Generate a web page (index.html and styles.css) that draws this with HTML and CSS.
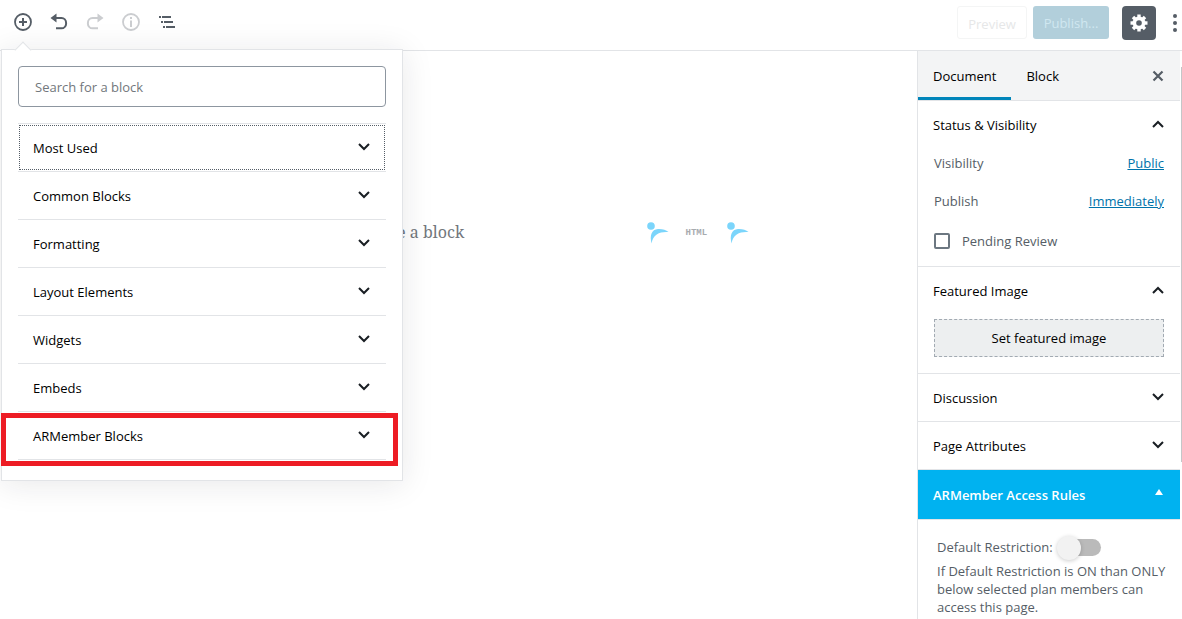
FILE: index.html
```html
<!DOCTYPE html>
<html lang="en">
<head>
    <meta charset="UTF-8">
    <meta name="viewport" content="width=device-width, initial-scale=1.0">
    <title>Edit Page</title>
    <link rel="stylesheet" href="styles.css">
</head>
<body>
    <!-- Chevrons shared by the panels -->
    <svg class="sprite" aria-hidden="true">
        <symbol id="chevron-down" viewBox="0 0 12 8"><path d="M1 1l5 5 5-5" fill="none" stroke="currentColor" stroke-width="2"/></symbol>
        <symbol id="chevron-up" viewBox="0 0 12 8"><path d="M1 7l5-5 5 5" fill="none" stroke="currentColor" stroke-width="2"/></symbol>
        <symbol id="armember" viewBox="0 0 22 22">
            <circle cx="4" cy="4" r="3.8" fill="currentColor"/>
            <path d="M4.600 21.500C2.500 13.500 4.500 7.500 11 7c4.500-.2 8 1 10.500 3C14 9.300 6 11.500 4.600 21.500z" fill="currentColor"/>
        </symbol>
    </svg>

    <header class="toolbar">
        <div class="toolbar-left">
            <div class="inserter">
                <button class="icon-button" type="button" aria-label="Add block" aria-expanded="true">
                    <svg width="20" height="20" viewBox="0 0 20 20" fill="none" stroke="currentColor"><circle cx="10" cy="10" r="8" stroke-width="1.800"/><path d="M10 6v8M6 10h8" stroke-width="2"/></svg>
                </button>

                <!-- Block inserter menu -->
                <div class="inserter-menu">
                    <input class="search" type="search" placeholder="Search for a block" aria-label="Search for a block">
                    <ul class="categories">
                        <li><button class="category focused" type="button">Most Used <svg class="chevron"><use href="#chevron-down"/></svg></button></li>
                        <li><button class="category" type="button">Common Blocks <svg class="chevron"><use href="#chevron-down"/></svg></button></li>
                        <li><button class="category" type="button">Formatting <svg class="chevron"><use href="#chevron-down"/></svg></button></li>
                        <li><button class="category" type="button">Layout Elements <svg class="chevron"><use href="#chevron-down"/></svg></button></li>
                        <li><button class="category" type="button">Widgets <svg class="chevron"><use href="#chevron-down"/></svg></button></li>
                        <li><button class="category" type="button">Embeds <svg class="chevron"><use href="#chevron-down"/></svg></button></li>
                        <li class="marked"><button class="category" type="button">ARMember Blocks <svg class="chevron"><use href="#chevron-down"/></svg></button></li>
                    </ul>
                </div>
            </div>
            <button class="icon-button" type="button" aria-label="Undo">
                <svg width="20" height="20" viewBox="0 0 20 20"><path d="M1.500 6l6-4.500v9z" fill="currentColor"/><path d="M6 6h6.500a4.500 5 0 0 1 0 10.300H7" fill="none" stroke="currentColor" stroke-width="2"/></svg>
            </button>
            <button class="icon-button" type="button" aria-label="Redo" disabled>
                <svg width="20" height="20" viewBox="0 0 20 20"><path d="M18.500 6l-6-4.500v9z" fill="currentColor"/><path d="M14 6H7.500a4.500 5 0 0 0 0 10.300H13" fill="none" stroke="currentColor" stroke-width="2"/></svg>
            </button>
            <button class="icon-button" type="button" aria-label="Content structure" disabled>
                <svg width="20" height="20" viewBox="0 0 20 20"><circle cx="10" cy="10" r="8" fill="none" stroke="currentColor" stroke-width="1.800"/><path d="M9 5h2v2H9zM9 8.500h2V15H9z" fill="currentColor"/></svg>
            </button>
            <button class="icon-button" type="button" aria-label="Block navigation">
                <svg width="20" height="20" viewBox="0 0 20 20" fill="currentColor"><path d="M2 4h2v2H2zM5 4h9v2H5zM4 9h2v2H4zM7 9h9v2H7zM6 14h2v2H6zM9 14h9v2H9z"/></svg>
            </button>
        </div>
        <div class="toolbar-right">
            <button class="preview" type="button" disabled>Preview</button>
            <button class="publish" type="button" disabled>Publish...</button>
            <button class="settings" type="button" aria-label="Settings">
                <svg width="20" height="20" viewBox="0 0 20 20"><g fill="currentColor"><circle cx="10" cy="10" r="6.500"/><path id="tooth" d="M8.300 1.500h3.400v17H8.300z"/><use href="#tooth" transform="rotate(45 10 10)"/><use href="#tooth" transform="rotate(90 10 10)"/><use href="#tooth" transform="rotate(135 10 10)"/></g><circle cx="10" cy="10" r="2.800" fill="#555d66"/></svg>
            </button>
            <button class="more" type="button" aria-label="More options">
                <svg width="6" height="20" viewBox="0 0 6 20" fill="currentColor"><circle cx="3" cy="3" r="2"/><circle cx="3" cy="10" r="2"/><circle cx="3" cy="17" r="2"/></svg>
            </button>
        </div>
    </header>

    <div class="layout">
        <main class="editor">
            <div class="appender">
                <p class="prompt">Start writing or type / to choose a block</p>
                <div class="shortcuts">
                    <button type="button" aria-label="ARMember form"><svg width="22" height="22"><use href="#armember"/></svg></button>
                    <button class="html" type="button">HTML</button>
                    <button type="button" aria-label="ARMember shortcode"><svg width="22" height="22"><use href="#armember"/></svg></button>
                </div>
            </div>
        </main>

        <aside class="sidebar">
            <div class="tabs">
                <button class="tab active" type="button">Document</button>
                <button class="tab" type="button">Block</button>
                <button class="close" type="button" aria-label="Close settings">
                    <svg width="12" height="12" viewBox="0 0 12 12"><path d="M1.500 1.500l9 9M10.500 1.500l-9 9" stroke="currentColor" stroke-width="2.200"/></svg>
                </button>
            </div>

            <section class="panel">
                <h2><button class="panel-title" type="button">Status &amp; Visibility <svg class="chevron"><use href="#chevron-up"/></svg></button></h2>
                <div class="panel-body status">
                    <div class="row"><span>Visibility</span><a href="#visibility">Public</a></div>
                    <div class="row"><span>Publish</span><a href="#publish">Immediately</a></div>
                    <div class="check"><input type="checkbox" id="pending"><label for="pending">Pending Review</label></div>
                </div>
            </section>

            <section class="panel">
                <h2><button class="panel-title" type="button">Featured Image <svg class="chevron"><use href="#chevron-up"/></svg></button></h2>
                <div class="panel-body featured">
                    <button class="set-image" type="button">Set featured image</button>
                </div>
            </section>

            <section class="panel">
                <h2><button class="panel-title" type="button">Discussion <svg class="chevron"><use href="#chevron-down"/></svg></button></h2>
            </section>

            <section class="panel">
                <h2><button class="panel-title" type="button">Page Attributes <svg class="chevron"><use href="#chevron-down"/></svg></button></h2>
            </section>

            <section class="rules">
                <h2><button class="panel-title" type="button">ARMember Access Rules <span class="triangle"></span></button></h2>
                <div class="rules-body">
                    <div class="restriction">
                        <label for="restriction">Default Restriction:</label>
                        <input class="switch" type="checkbox" id="restriction">
                    </div>
                    <p>If Default Restriction is ON than ONLY below selected plan members can access this page.</p>
                </div>
            </section>
        </aside>
    </div>
</body>
</html>
```
FILE: styles.css
```css
/* Basic Reset */
* {
    margin: 0;
    padding: 0;
    box-sizing: border-box;
}

body {
    display: flex;
    flex-direction: column;
    height: 100vh;
    overflow: hidden;
    background: #fff;
    color: #555d66;
    font-family: "Open Sans", "Noto Sans", sans-serif;
    font-size: 13px;
    line-height: 18px;
}

button, input {
    font: inherit;
    color: inherit;
}

button {
    display: flex;
    align-items: center;
    justify-content: center;
    background: none;
    border: 0;
}

svg {
    display: block;
}

.sprite {
    position: absolute;
    width: 0;
    height: 0;
}

.chevron {
    width: 12px;
    height: 8px;
}

/* Top toolbar */
.toolbar {
    position: relative;
    z-index: 2;
    display: flex;
    flex: none;
    justify-content: space-between;
    height: 51px;
    padding: 0 4px;
    border-bottom: 1px solid #e2e4e7;
}

.toolbar-left {
    display: flex;
    align-items: center;
    height: 44px;
}

.icon-button {
    width: 36px;
    height: 36px;
    padding-left: 2px;
}

.icon-button:disabled {
    color: #cbcdd0;
}

.toolbar-right {
    display: flex;
    align-items: center;
    height: 45px;
}

.preview {
    width: 70px;
    height: 33px;
    padding-top: 2px;
    border: 1px solid #f4f5f5;
    border-radius: 3px;
    color: #e6e7e8;
}

.publish {
    width: 76px;
    height: 33px;
    margin-left: 6px;
    border-radius: 3px;
    background: #b2cfdb;
    color: #d0e7f0;
}

.settings {
    width: 34px;
    height: 34px;
    margin-left: 13px;
    border-radius: 4px;
    background: #555d66;
    color: #fff;
}

.more {
    margin-left: 16px;
}

/* Inserter menu hangs below the add button */
.inserter-menu {
    position: absolute;
    top: 49px;
    left: 1px;
    width: 402px;
    padding: 16px 16px 20px;
    background: #fff;
    border: 1px solid #e2e4e7;
    box-shadow: 0 3px 30px rgba(25, 30, 35, 0.1);
}

.inserter-menu::before {
    content: "";
    position: absolute;
    top: -6px;
    left: 15px;
    width: 11px;
    height: 11px;
    background: #fff;
    border: solid #e2e4e7;
    border-width: 1px 0 0 1px;
    transform: rotate(45deg);
}

.search {
    display: block;
    position: relative;
    width: 100%;
    height: 41px;
    margin-bottom: 16px;
    padding: 0 16px;
    border: 1px solid #8d96a0;
    border-radius: 4px;
    background: #fff;
    appearance: none;
}

.search::placeholder {
    color: #72777c;
    opacity: 1;
}

.categories {
    list-style: none;
    border-bottom: 1px solid #e2e4e7;
}

.categories li {
    position: relative;
    border-top: 1px solid #e2e4e7;
}

.category {
    justify-content: space-between;
    width: 100%;
    height: 47px;
    padding: 0 16px 0 15px;
    color: #000;
    font-weight: 500;
}

.category .chevron {
    margin-bottom: 1px;
    color: #191e23;
}

.focused {
    outline: 1px dotted #555d66;
    outline-offset: -2px;
}

.marked::after {
    content: "";
    position: absolute;
    top: 1px;
    right: -12px;
    bottom: -7px;
    left: -17px;
    border: 5px solid #ed1c24;
    pointer-events: none;
}

/* Editor */
.layout {
    display: flex;
    flex: 1;
    min-height: 0;
}

.editor {
    flex: 1;
    padding-top: 160px;
}

.appender {
    display: flex;
    align-items: center;
    justify-content: space-between;
    max-width: 610px;
    height: 42px;
    margin: 0 auto;
    padding: 0 15px 0 13px;
}

.prompt {
    color: #72777c;
    font-family: "Noto Serif", "DejaVu Serif Condensed", "DejaVu Serif", serif;
    font-size: 16px;
    line-height: 28px;
}

.shortcuts {
    display: flex;
    gap: 17px;
    padding-top: 2px;
    color: #7bd5fb;
}

.shortcuts .html {
    justify-content: flex-start;
    width: 24px;
    color: #a7abaf;
    font-family: "Liberation Mono", monospace;
    font-size: 9px;
    font-weight: 700;
}

/* Settings sidebar */
.sidebar {
    position: relative;
    width: 265px;
    padding-right: 2px;
    border-left: 1px solid #e2e4e7;
    background: #fff;
}

/* Scrollbar thumb */
.sidebar::after {
    content: "";
    position: absolute;
    top: 16px;
    right: 0;
    width: 1px;
    height: 395px;
    background: #c4c6c8;
}

.tabs {
    display: flex;
    height: 50px;
    background: #f3f4f5;
    border-bottom: 1px solid #e2e4e7;
    color: #000;
}

.tab {
    height: 49px;
    padding: 3px 15px 0;
    border-bottom: 3px solid transparent;
}

.tab.active {
    border-color: #0085ba;
    font-weight: 500;
}

.close {
    margin-left: auto;
    padding: 0 16px;
    color: #555d66;
}

.panel {
    border-bottom: 1px solid #e2e4e7;
}

h2 {
    font-size: 13px;
    font-weight: 500;
}

.panel-title {
    justify-content: space-between;
    width: 100%;
    height: 47px;
    padding: 0 16px 0 15px;
    color: #000;
}

.panel-title .chevron {
    margin-bottom: 1px;
    color: #191e23;
}

.panel-body {
    padding: 0 16px;
}

.status {
    display: flex;
    flex-direction: column;
    gap: 20px;
    padding-top: 6px;
    padding-bottom: 16px;
}

.row {
    display: flex;
    justify-content: space-between;
}

.row a {
    color: #0073aa;
}

.check {
    display: flex;
    align-items: center;
    gap: 12px;
    padding-top: 2px;
}

.check input {
    width: 16px;
    height: 16px;
    border: 2px solid #6c7781;
    border-radius: 2px;
    appearance: none;
}

.featured {
    padding-top: 5px;
    padding-bottom: 16px;
}

.set-image {
    width: 100%;
    height: 38px;
    border: 1px dashed #a2aab2;
    background: #edeff0;
    color: #000;
}

.rules .panel-title {
    height: 49px;
    padding-right: 17px;
    background: #00b2f0;
    color: #fff;
    font-weight: 600;
}

.triangle {
    margin-bottom: 6px;
    border: solid transparent;
    border-width: 0 4px 6px;
    border-bottom-color: #fff;
}

.rules-body {
    padding: 18px 8px 18px 19px;
    border-top: 1px solid #e2e4e7;
}

.restriction {
    display: flex;
    align-items: center;
    gap: 4px;
    margin-bottom: 6px;
    font-weight: 500;
}

.switch {
    position: relative;
    width: 44px;
    height: 17px;
    appearance: none;
}

.switch::before {
    content: "";
    display: block;
    height: 17px;
    margin-left: 4px;
    border-radius: 9px;
    background: #bababa;
}

.switch::after {
    content: "";
    position: absolute;
    top: -3px;
    left: 0;
    width: 24px;
    height: 24px;
    border-radius: 50%;
    background: #f2f2f2;
    box-shadow: 0 1px 4px rgba(0, 0, 0, 0.2);
}
```
